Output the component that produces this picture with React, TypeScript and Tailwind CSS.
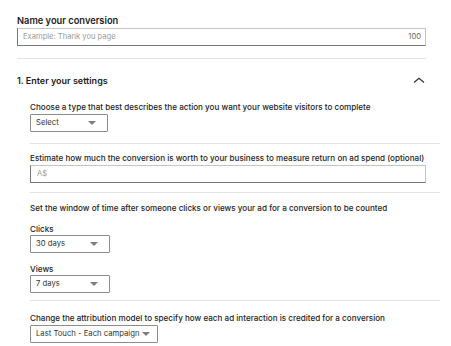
import React from 'react';

const Caret: React.FC = () => (
  <svg width="8" height="4" viewBox="0 0 8 4" className="shrink-0">
    <path d="M0 0 L8 0 L4 4 Z" fill="#7d7d7d" />
  </svg>
);

const SelectBox: React.FC<{ label: string; width: string; tight?: boolean }> = ({ label, width, tight = false }) => (
  <div
    className={`${width} h-[18px] border border-[#8c8c8c] rounded-[1px] flex items-center pl-[5px] whitespace-nowrap ${tight ? 'gap-[3px] pr-[6px]' : 'justify-between pr-[11px]'} text-[7.7px] text-[#333]`}
  >
    <span>{label}</span>
    <Caret />
  </div>
);

const Label: React.FC<{ children: React.ReactNode; className?: string }> = ({ children, className = '' }) => (
  <div className={`text-[8.1px] font-medium text-[#1d1d1d] leading-[11px] whitespace-nowrap ${className}`}>{children}</div>
);

const App: React.FC = () => {
  return (
    <div className="w-[451px] h-[346px] bg-white overflow-hidden pl-[17px] pt-[15px]" style={{ fontFamily: 'Inter, "Liberation Sans", Arial, sans-serif' }}>
      <div className="text-[9.3px] font-semibold text-[#1d1d1d] leading-[12px]">Name your conversion</div>
      <div className="mt-[1px] w-[409px] h-[18px] border border-[#c4c4c4] border-l-[#777] border-b-[#777] flex items-center justify-between pl-[5px] pr-[4px] text-[7.6px]">
        <span className="text-[#9a9a9a]">Example: Thank you page</span>
        <span className="text-[#666]">100</span>
      </div>
      <div className="mt-[12px] w-[409px] border-t border-[#e3e3e3]" />

      <div className="mt-[16px] w-[409px] h-[12px] flex items-center justify-between">
        <div className="text-[9px] font-semibold text-[#1d1d1d] leading-[12px]">1. Enter your settings</div>
        <svg width="12" height="6" viewBox="0 0 12 6" className="mr-[1px] -mt-[3px]">
          <path d="M1 5.5 L6 1.2 L11 5.5" fill="none" stroke="#333" strokeWidth="1.2" />
        </svg>
      </div>

      <div className="pl-[13px]">
        <Label className="mt-[15px]">Choose a type that best describes the action you want your website visitors to complete</Label>
        <div className="mt-[1px]">
          <SelectBox label="Select" width="w-[78px]" />
        </div>
        <div className="mt-[11px] w-[410px] border-t border-[#e3e3e3]" />

        <Label className="mt-[9px]">Estimate how much the conversion is worth to your business to measure return on ad spend (optional)</Label>
        <div className="mt-[1px] w-[396px] h-[18px] border border-[#c4c4c4] border-l-[#777] border-b-[#777] flex items-center pl-[6px] text-[7.6px] text-[#9a9a9a]">
          A$
        </div>
        <div className="mt-[9px] w-[410px] border-t border-[#e3e3e3]" />

        <Label className="mt-[10px]">Set the window of time after someone clicks or views your ad for a conversion to be counted</Label>
        <Label className="mt-[10px]">Clicks</Label>
        <SelectBox label="30 days" width="w-[80px]" />
        <Label className="mt-[11px]">Views</Label>
        <SelectBox label="7 days" width="w-[80px]" />
        <div className="mt-[7px] w-[410px] border-t border-[#e3e3e3]" />

        <Label className="mt-[12px]">Change the attribution model to specify how each ad interaction is credited for a conversion</Label>
        <div className="mt-[1px]">
          <SelectBox label="Last Touch - Each campaign" width="w-[128px]" tight />
        </div>
      </div>
    </div>
  );
};

export default App;
